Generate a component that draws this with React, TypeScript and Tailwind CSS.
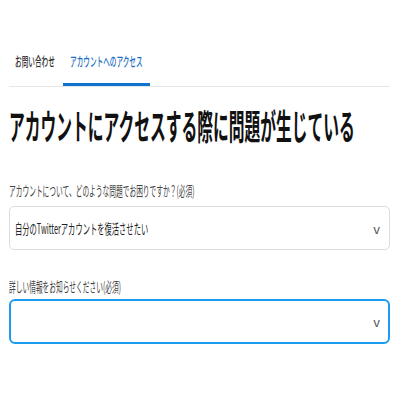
import React from 'react';

const font = { fontFamily: '"Noto Sans CJK JP", "Noto Sans", sans-serif' };

const Chevron = () => (
  <span className="text-[13px] leading-none text-[#555]">v</span>
);

export default function App() {
  return (
    <div className="w-[404px] h-[404px] bg-white overflow-hidden px-[9px]" style={font}>
      {/* Tabs */}
      <div className="flex w-[381px] border-b border-[#e6e6e6]">
        <div className="w-[54px] pt-[53px] pb-[14px] border-b-[3px] border-transparent pl-[6px]">
          <span className="block whitespace-nowrap text-[13px] leading-[16px] font-medium text-[#333] origin-left scale-x-[0.51]">
            お問い合わせ
          </span>
        </div>
        <div className="w-[87px] pt-[53px] pb-[14px] border-b-[3px] border-[#1273cf] pl-[7px]">
          <span className="block whitespace-nowrap text-[13px] leading-[16px] font-medium text-[#1a6fc4] origin-left scale-x-[0.51]">
            アカウントへのアクセス
          </span>
        </div>
      </div>

      {/* Title */}
      <h1 className="mt-[18px] whitespace-nowrap text-[35px] leading-[40px] font-bold text-[#111] origin-left scale-x-[0.45]">
        アカウントにアクセスする際に問題が生じている
      </h1>

      {/* Field 1 */}
      <div className="mt-[37px]">
        <div className="whitespace-nowrap text-[14px] leading-[16px] text-[#444] origin-left scale-x-[0.48]">
          アカウントについて、どのような問題でお困りですか？(必須)
        </div>
        <div className="mt-[8px] h-[44px] w-[381px] rounded-[5px] border border-[#dcdcdc] flex items-center justify-between pl-[5px] pr-[9px]">
          <span className="whitespace-nowrap text-[14px] leading-[16px] text-[#222] origin-left scale-x-[0.52]">
            自分のTwitterアカウントを復活させたい
          </span>
          <Chevron />
        </div>
      </div>

      {/* Field 2 */}
      <div className="mt-[28px]">
        <div className="whitespace-nowrap text-[14px] leading-[16px] text-[#444] origin-left scale-x-[0.48]">
          詳しい情報をお知らせください(必須)
        </div>
        <div className="mt-[5px] h-[45px] w-[381px] rounded-[6px] border-2 border-[#1d9bf0] flex items-center justify-end pr-[8px]">
          <Chevron />
        </div>
      </div>
    </div>
  );
}
